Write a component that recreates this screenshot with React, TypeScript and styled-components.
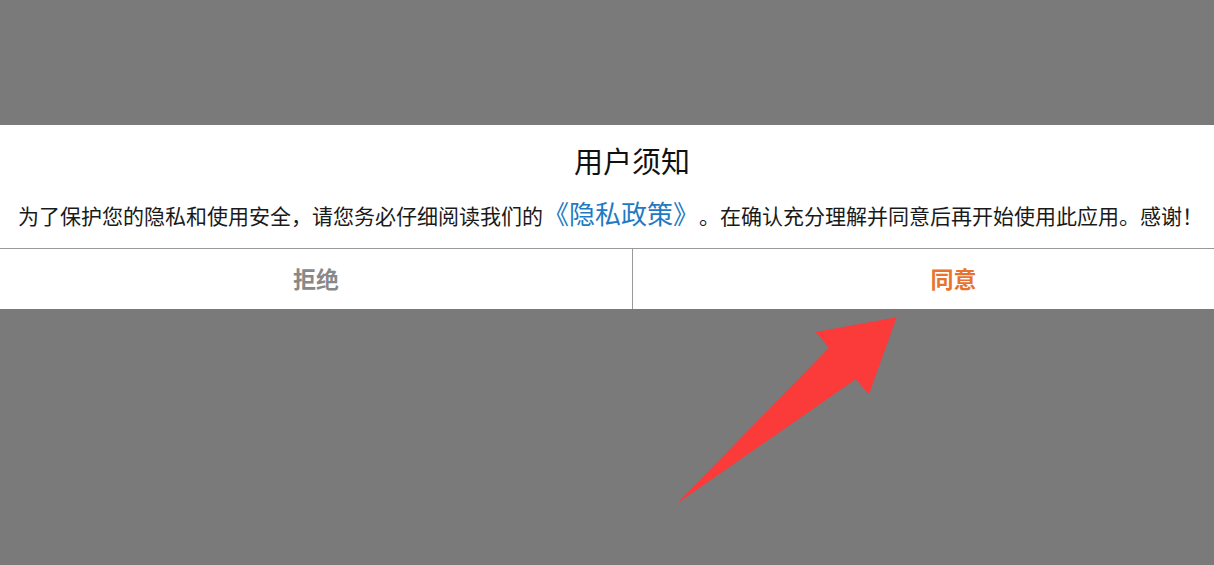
import React from "react";
import styled, { createGlobalStyle } from "styled-components";

const Global = createGlobalStyle`
  html, body { margin: 0; padding: 0; }
  body {
    font-family: "Noto Sans CJK SC", "Noto Sans", sans-serif;
    background: #7a7a7a;
    text-spacing-trim: space-all;
  }
`;

const Overlay = styled.div`
  position: relative;
  width: 1214px;
  height: 565px;
  background: #7a7a7a;
  padding-top: 125px;
  box-sizing: border-box;
  overflow: hidden;
`;

const Dialog = styled.div`
  width: 1274px;
  background: #ffffff;
  display: flex;
  flex-direction: column;
`;

const Title = styled.h1`
  width: 1264px;
  margin: 0;
  padding-top: 14px;
  font-size: 29px;
  font-weight: 400;
  line-height: 42px;
  color: #111;
  text-align: center;
`;

const Body = styled.p`
  margin: 11px 0 0 0;
  padding: 0 0 12px 18px;
  font-size: 21px;
  line-height: 42px;
  color: #1a1a1a;
  text-align: left;
  white-space: nowrap;
  text-spacing-trim: space-all;
`;

const Link = styled.a`
  font-size: 26px;
  color: #1f7ac3;
  text-decoration: none;
`;

const Actions = styled.div`
  display: grid;
  grid-template-columns: 632px 1fr;
  border-top: 1px solid #999;
  height: 60px;
`;

const Action = styled.button<{ $tone: "muted" | "accent" }>`
  border: none;
  background: transparent;
  font-family: inherit;
  font-size: 23px;
  font-weight: 700;
  color: ${(p) => (p.$tone === "accent" ? "#e8732e" : "#888888")};
  border-left: ${(p) => (p.$tone === "accent" ? "1px solid #999" : "none")};
  padding: 0 0 2px ${(p) => (p.$tone === "accent" ? 0 : 0)}px;
  cursor: pointer;
  display: flex;
  align-items: center;
  justify-content: center;
`;

const Arrow = styled.svg`
  position: absolute;
  left: 0;
  top: 0;
  pointer-events: none;
`;

export default function App() {
  return (
    <>
      <Global />
      <Overlay>
        <Dialog>
          <Title>用户须知</Title>
          <Body>
            为了保护您的隐私和使用安全，请您务必仔细阅读我们的
            <Link href="#">《隐私政策》</Link>
            。在确认充分理解并同意后再开始使用此应用。感谢！
          </Body>
          <Actions>
            <Action $tone="muted">拒绝</Action>
            <Action $tone="accent">同意</Action>
          </Actions>
        </Dialog>
        <Arrow width="1214" height="565" viewBox="0 0 1214 565">
          <polygon
            points="896.7,317.3 869,394.3 855.7,379.3 677.3,503.3 829,347.7 815.7,332"
            fill="#fb3a3a"
          />
        </Arrow>
      </Overlay>
    </>
  );
}
